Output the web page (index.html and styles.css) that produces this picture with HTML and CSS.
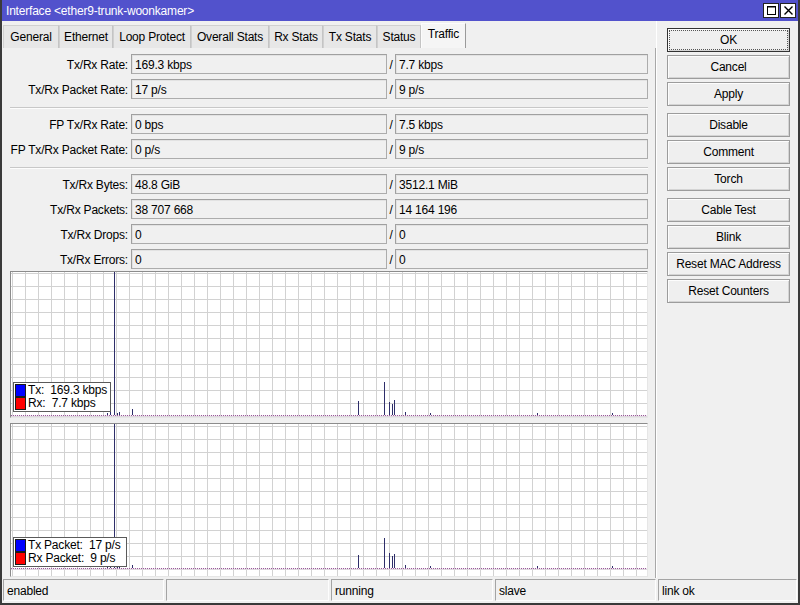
FILE: index.html
```html
<!DOCTYPE html>
<html>
<head>
<meta charset="utf-8">
<link rel="stylesheet" href="styles.css">
</head>
<body>
<div class="window">
  <div class="titlebar">
    <span class="title">Interface &lt;ether9-trunk-woonkamer&gt;</span>
    <div class="tbuttons">
      <span class="tbtn"><svg width="13" height="13" viewBox="0 0 13 13"><rect x="2.5" y="2.5" width="8" height="8" fill="none" stroke="#000" stroke-width="1"/><line x1="2.5" y1="3" x2="10.5" y2="3" stroke="#000" stroke-width="1"/></svg></span>
      <span class="tbtn"><svg width="13" height="13" viewBox="0 0 13 13"><path d="M2.5 2.5L10.5 10.5M10.5 2.5L2.5 10.5" stroke="#000" stroke-width="1.4" fill="none"/></svg></span>
    </div>
  </div>
  <div class="main">
    <div class="left">
      <div class="tabs">
        <div class="tab">General</div>
        <div class="tab">Ethernet</div>
        <div class="tab">Loop Protect</div>
        <div class="tab">Overall Stats</div>
        <div class="tab">Rx Stats</div>
        <div class="tab">Tx Stats</div>
        <div class="tab">Status</div>
        <div class="tab active">Traffic</div>
      </div>
      <div class="panel">
        <div class="group">
          <div class="row"><span class="label">Tx/Rx Rate:</span><span class="field">169.3 kbps</span><span class="slash">/</span><span class="field f2">7.7 kbps</span></div>
          <div class="row"><span class="label">Tx/Rx Packet Rate:</span><span class="field">17 p/s</span><span class="slash">/</span><span class="field f2">9 p/s</span></div>
        </div>
        <div class="sep"></div>
        <div class="group">
          <div class="row"><span class="label">FP Tx/Rx Rate:</span><span class="field">0 bps</span><span class="slash">/</span><span class="field f2">7.5 kbps</span></div>
          <div class="row"><span class="label">FP Tx/Rx Packet Rate:</span><span class="field">0 p/s</span><span class="slash">/</span><span class="field f2">9 p/s</span></div>
        </div>
        <div class="sep"></div>
        <div class="group">
          <div class="row"><span class="label">Tx/Rx Bytes:</span><span class="field">48.8 GiB</span><span class="slash">/</span><span class="field f2">3512.1 MiB</span></div>
          <div class="row"><span class="label">Tx/Rx Packets:</span><span class="field">38 707 668</span><span class="slash">/</span><span class="field f2">14 164 196</span></div>
          <div class="row"><span class="label">Tx/Rx Drops:</span><span class="field">0</span><span class="slash">/</span><span class="field f2">0</span></div>
          <div class="row"><span class="label">Tx/Rx Errors:</span><span class="field">0</span><span class="slash">/</span><span class="field f2">0</span></div>
        </div>
        <div class="chart chart1">
          <svg class="plot" width="636" height="145" viewBox="0 0 636 145">
            <defs>
              <pattern id="grid1" width="13" height="13" patternUnits="userSpaceOnUse">
                <path d="M1.5 0V13M0 1.5H13" stroke="#d2d2d2" stroke-width="1" fill="none"/>
              </pattern>
            </defs>
            <rect width="636" height="145" fill="#fff"/>
            <rect width="636" height="145" fill="url(#grid1)"/>
            <line x1="0" y1="144" x2="636" y2="144" stroke="#eadcea" stroke-width="1"/>
            <line x1="0" y1="143.5" x2="636" y2="143.5" stroke="#9a5a9a" stroke-width="1" stroke-dasharray="1 1"/>
            <path d="M103.5 0V143M121.5 137V143M347.5 129V143M373.5 110V143M378.5 130V143M381.5 132V143M383.5 128V143M96.5 141V143M99.5 140V143M106.5 141V143M108.5 140V143M394.5 140V143M419.5 141V143M526.5 141V143M601.5 141V143" stroke="#2e2e6a" stroke-width="1" fill="none"/>
          </svg>
          <div class="legend leg1">
            <div class="lrow"><span class="sw blue"></span><span class="ltext">Tx:  169.3 kbps</span></div>
            <div class="lrow"><span class="sw red"></span><span class="ltext">Rx:  7.7 kbps</span></div>
          </div>
        </div>
        <div class="chart chart2">
          <svg class="plot" width="636" height="152" viewBox="0 0 636 152">
            <defs>
              <pattern id="grid2" width="13" height="13" y="1" patternUnits="userSpaceOnUse">
                <path d="M1.5 0V13M0 1.5H13" stroke="#d2d2d2" stroke-width="1" fill="none"/>
              </pattern>
            </defs>
            <rect width="636" height="152" fill="#fff"/>
            <rect width="636" height="152" fill="url(#grid2)"/>
            <line x1="0" y1="145" x2="636" y2="145" stroke="#eadcea" stroke-width="1"/>
            <line x1="0" y1="144.5" x2="636" y2="144.5" stroke="#9a5a9a" stroke-width="1" stroke-dasharray="1 1"/>
            <path d="M103.5 0V144M121.5 141V144M347.5 131V144M373.5 114V144M378.5 129V144M381.5 132V144M383.5 130V144M96.5 142V144M99.5 141V144M106.5 142V144M108.5 141V144M394.5 141V144M419.5 142V144M526.5 142V144M601.5 142V144" stroke="#2e2e6a" stroke-width="1" fill="none"/>
          </svg>
          <div class="legend leg2">
            <div class="lrow"><span class="sw blue"></span><span class="ltext">Tx Packet:  17 p/s</span></div>
            <div class="lrow"><span class="sw red"></span><span class="ltext">Rx Packet:  9 p/s</span></div>
          </div>
        </div>
      </div>
    </div>
    <div class="actions">
      <div class="btn ok">OK</div>
      <div class="btn">Cancel</div>
      <div class="btn">Apply</div>
      <div class="btn gap">Disable</div>
      <div class="btn">Comment</div>
      <div class="btn">Torch</div>
      <div class="btn gap">Cable Test</div>
      <div class="btn">Blink</div>
      <div class="btn">Reset MAC Address</div>
      <div class="btn">Reset Counters</div>
    </div>
  </div>
  <div class="statusbar">
    <div class="cell c1">enabled</div>
    <div class="cell c2"></div>
    <div class="cell c3">running</div>
    <div class="cell c4">slave</div>
    <div class="cell c5">link ok</div>
  </div>
</div>
</body>
</html>
```

FILE: styles.css
```css
* { box-sizing: border-box; }
html, body { margin: 0; padding: 0; }
body {
  width: 800px;
  height: 605px;
  overflow: hidden;
  background: #f0f0f0;
  font-family: "Liberation Sans", Arial, sans-serif;
  font-size: 12px;
  letter-spacing: -0.2px;
  color: #000;
}
.window {
  width: 800px;
  height: 605px;
  border: 2px solid #3a3a3a;
  border-top: 0;
  background: #f0f0f0;
  display: flex;
  flex-direction: column;
}
.titlebar {
  height: 21px;
  flex: none;
  background: #5252cc;
  color: #fff;
  display: flex;
  align-items: center;
  justify-content: space-between;
  padding: 0 2px 0 4px;
}
.title { line-height: 21px; padding-top: 1px; }
.tbuttons { display: flex; gap: 1px; }
.tbtn {
  width: 16px;
  height: 15px;
  background: #fff;
  border: 1px solid #222;
  display: flex;
  align-items: center;
  justify-content: center;
}
.tbtn svg { display: block; }
.main {
  height: 557px;
  flex: none;
  display: flex;
}
.left {
  width: 654px;
  display: flex;
  flex-direction: column;
}
.tabs {
  height: 27px;
  flex: none;
  display: flex;
  align-items: flex-end;
  padding-left: 1px;
}
.tab {
  height: 23px;
  line-height: 22px;
  text-align: center;
  background: #e7e7e7;
  border: 1px solid #d0d0d0;
  border-bottom: 0;
  border-right-color: #c4c4c4;
  white-space: nowrap;
}
.tab:nth-child(1) { width: 56px; }
.tab:nth-child(2) { width: 54px; }
.tab:nth-child(3) { width: 78px; }
.tab:nth-child(4) { width: 78px; }
.tab:nth-child(5) { width: 54px; }
.tab:nth-child(6) { width: 54px; }
.tab:nth-child(7) { width: 44px; }
.tab:nth-child(8) { width: 45px; }
.tab.active {
  height: 25px;
  line-height: 21px;
  background: #f5f5f5;
  border-color: #fcfcfc #9a9a9a #fcfcfc #fcfcfc;
}
.panel {
  flex: 1;
  display: flex;
  flex-direction: column;
  padding: 6px 7px 1px 8px;
  border-right: 1px solid #a8a8a8;
}
.group {
  display: flex;
  flex-direction: column;
  gap: 5px;
}
.row {
  display: flex;
  align-items: center;
  height: 20px;
}
.label {
  width: 118px;
  text-align: right;
  white-space: nowrap;
  padding-top: 2px;
}
.field {
  width: 256px;
  height: 20px;
  margin-left: 3px;
  padding: 0 3px;
  line-height: 20px;
  background: #f0f0f0;
  border: 1px solid #acacac;
  border-top-color: #a0a0a0;
  border-left-color: #a0a0a0;
  box-shadow: inset 1px 1px 0 #e2e2e2;
  white-space: nowrap;
  overflow: hidden;
}
.field.f2 {
  width: 253px;
  margin-left: 0;
}
.slash {
  width: 8px;
  text-align: center;
  padding-top: 2px;
}
.sep {
  height: 2px;
  margin: 8px 0 5px;
  border-top: 1px solid #c8c8c8;
  border-bottom: 1px solid #fdfdfd;
}
.chart {
  position: relative;
  width: 638px;
  border: 1px solid #8c8c8c;
  border-right-color: #e6e6e6;
  border-bottom-color: #e6e6e6;
  background: #fff;
}
.chart1 { height: 147px; margin-top: 2px; }
.chart2 { height: 154px; margin-top: 5px; }
.plot { display: block; }
.legend {
  position: absolute;
  left: 2px;
  background: #fff;
  border: 1px solid #5a5a5a;
  padding: 1px;
  display: flex;
  flex-direction: column;
}
.leg1 { bottom: 5px; width: 98px; }
.leg2 { bottom: 9px; width: 114px; }
.lrow {
  display: flex;
  align-items: center;
  height: 13px;
}
.sw {
  width: 11px;
  height: 13px;
  border: 1px solid #1a1a1a;
  flex: none;
}
.sw.blue { background: #0000ff; }
.sw.red { background: #ff0000; }
.ltext {
  margin-left: 2px;
  white-space: pre;
  line-height: 13px;
  font-size: 12px;
}
.actions {
  flex: 1;
  border-left: 1px solid #fff;
  padding: 7px 0 0 10px;
  display: flex;
  flex-direction: column;
}
.btn {
  width: 123px;
  height: 24px;
  margin-bottom: 3px;
  line-height: 23px;
  text-align: center;
  background: #efefef;
  border: 1px solid #9c9c9c;
  box-shadow: inset 1px 1px 0 #fdfdfd, inset -1px -1px 0 #d4d4d4;
  white-space: nowrap;
}
.btn.gap { margin-top: 4px; }
.btn.ok {
  border-color: #333;
  outline: 1px dotted #555;
  outline-offset: -3px;
}
.statusbar {
  height: 25px;
  flex: none;
  display: flex;
  gap: 2px;
  padding: 1px 1px 2px 1px;
}
.cell {
  height: 22px;
  line-height: 21px;
  padding-left: 3px;
  padding-top: 1px;
  border: 1px solid #a4a4a4;
  border-right-color: #fdfdfd;
  border-bottom-color: #fdfdfd;
  white-space: nowrap;
}
.c1 { width: 161px; }
.c2 { width: 163px; }
.c3 { width: 162px; }
.c4 { width: 161px; }
.c5 { flex: 1; }
```
